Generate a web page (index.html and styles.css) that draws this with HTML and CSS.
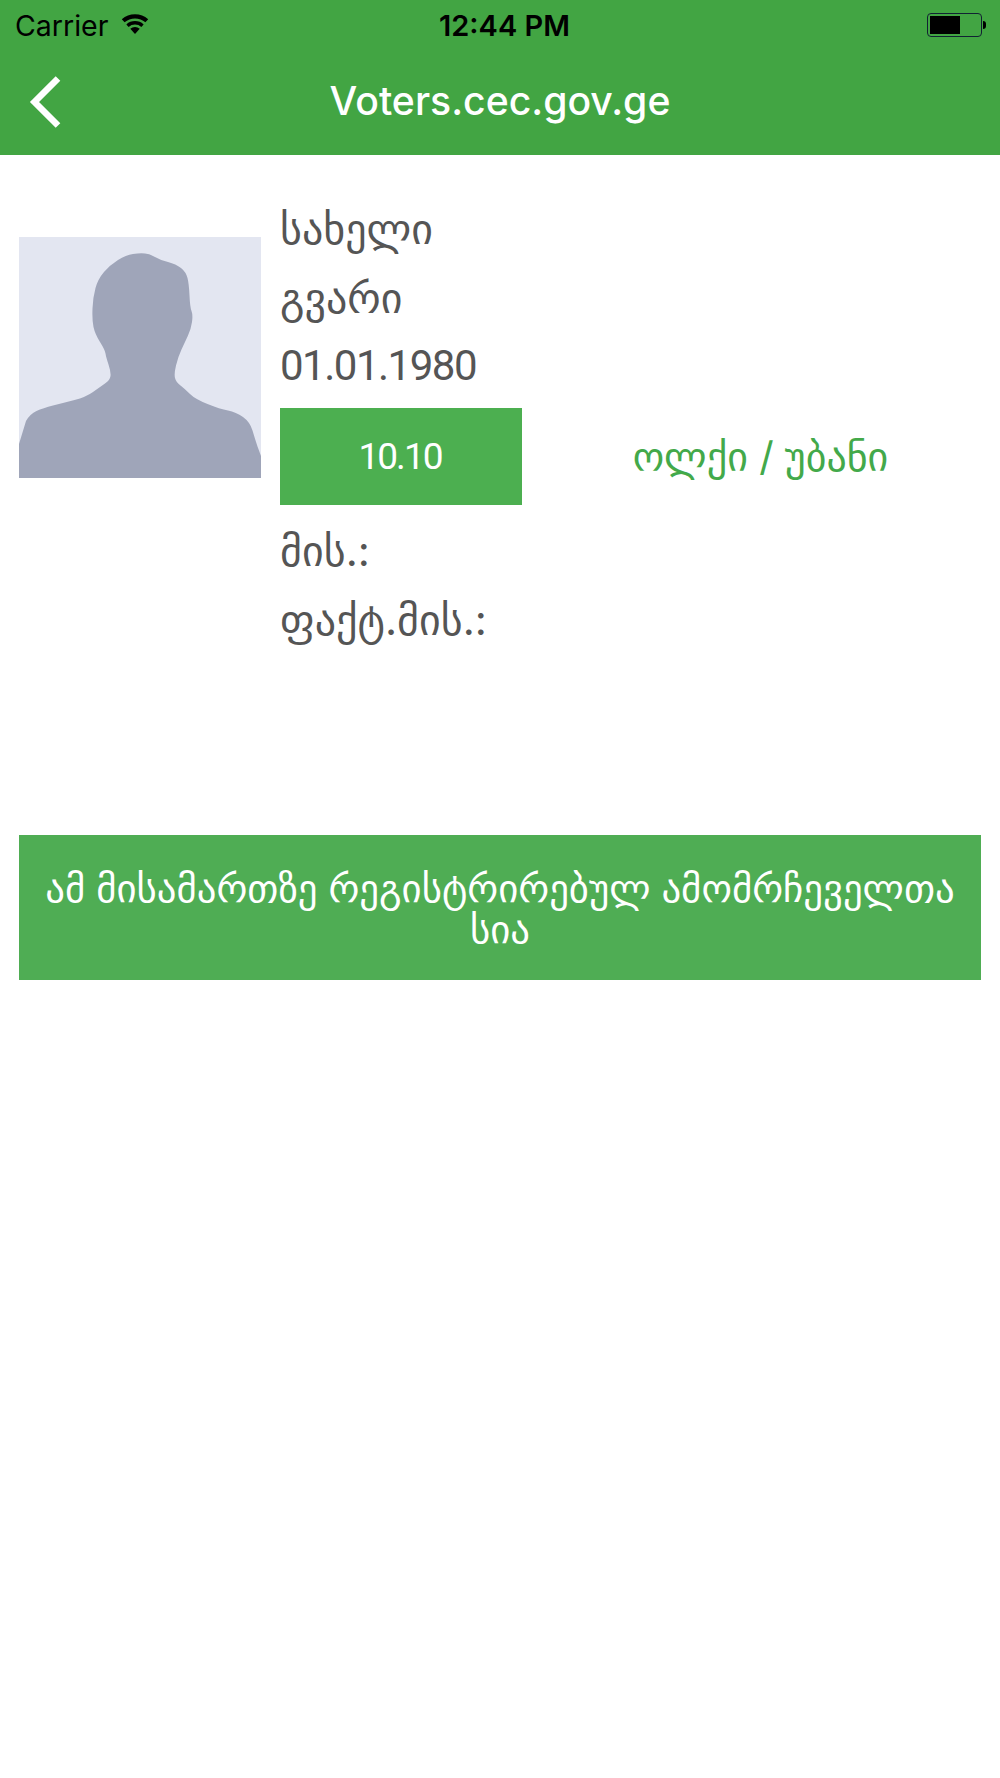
FILE: index.html
```html
<!DOCTYPE html>
<html lang="ka">
<head>
<meta charset="utf-8">
<title>Voters.cec.gov.ge</title>
<link rel="stylesheet" href="styles.css">
</head>
<body>
<header class="top">
  <div class="status">
    <div class="status-left">
      <span class="carrier">Carrier</span>
      <svg class="wifi" viewBox="0 0 28 21" width="28" height="21"><path d="M14 21 L9.3 15.8 A7 7 0 0 1 18.7 15.8 Z"/><path class="wifi-arc" stroke-width="3.4" d="M6.5 12.7 A11.2 11.2 0 0 1 21.5 12.7"/><path class="wifi-arc" stroke-width="4.2" d="M2.2 7.8 A17.7 17.7 0 0 1 25.8 7.8"/></svg>
    </div>
    <span class="clock">12:44 PM</span>
    <div class="battery"><span class="battery-body"><span class="battery-fill"></span></span><span class="battery-tip"></span></div>
  </div>
  <div class="nav">
    <svg class="back" viewBox="0 0 34 54" width="34" height="54"><path d="M31 3.5 L7.5 27 L31 50.5" fill="none" stroke="#fff" stroke-width="6.5"/></svg>
    <h1 class="title">Voters.cec.gov.ge</h1>
  </div>
</header>
<main class="content">
  <section class="profile">
    <div class="photo">
      <svg viewBox="0 0 242 241" width="242" height="241"><path fill="#9fa5b9" d="M0 241 L0 207 L7 184 Q11 177 17.5 174 Q24 171 34 168.5 Q44 166 55.5 163 Q67 160 74 155 Q81 150 86 146.5 Q91 143 91.5 139 Q92 135 89.5 127.5 Q87 120 86.5 116.5 Q86 113 81 105 Q76 97 74.5 90 Q73 83 73.5 71.5 Q74 60 76.5 51 Q79 42 85 35 Q91 28 99 23 Q107 18 114 17 Q121 16 126 16.5 Q131 17 136 20 Q141 23 149 25 Q157 27 162 31 Q167 35 168.5 41 Q170 47 170.5 58.5 Q171 70 172.5 74 Q174 78 173 85 Q172 92 169 98.5 Q166 105 162.5 112.5 Q159 120 157 128.5 Q155 137 156 141 Q157 145 161.5 148.5 Q166 152 171 157 Q176 162 188.5 167 Q201 172 209 173.5 Q217 175 224 180 Q231 185 233.5 193.5 Q236 202 238.5 209.5 L242 219 L242 241 Z"/></svg>
    </div>
    <div class="details">
      <p class="line">სახელი</p>
      <p class="line">გვარი</p>
      <p class="line line-date">01.01.1980</p>
      <div class="district">
        <div class="code">10.10</div>
        <div class="district-label">ოლქი / უბანი</div>
      </div>
      <p class="line">მის.:</p>
      <p class="line">ფაქტ.მის.:</p>
    </div>
  </section>
  <button class="list-btn" type="button">ამ მისამართზე რეგისტრირებულ ამომრჩეველთა სია</button>
</main>
</body>
</html>
```
FILE: styles.css
```css
* { box-sizing: border-box; }
html, body { margin: 0; padding: 0; }
body { width: 1000px; height: 1778px; background: #fff; font-family: "Inter", "DejaVu Sans", sans-serif; color: #555; overflow: hidden; }
.top { background: #42a543; height: 155px; }
.status { height: 50px; display: grid; grid-template-columns: 1fr auto 1fr; align-items: center; padding: 0 14px 0 15px; color: #000; }
.status-left { display: flex; align-items: center; gap: 13px; }
.carrier { font-size: 28.5px; }
.wifi { margin-top: -3px; }
.wifi-arc { fill: none; stroke: #000; }
.clock { font-size: 29px; font-weight: 600; margin-left: 8px; }
.battery { display: flex; align-items: center; justify-self: end; }
.battery-body { width: 55px; height: 24px; border: 1px solid #123; border-radius: 4px; padding: 2px; display: block; }
.battery-fill { display: block; width: 30px; height: 100%; background: #000; }
.battery-tip { width: 3px; height: 8px; background: #000; border-radius: 0 4px 4px 0; margin-left: 1px; }
.nav { height: 105px; display: flex; align-items: center; justify-content: center; position: relative; padding-bottom: 4px; }
.back { position: absolute; left: 27px; top: 25px; }
.title { margin: 0; font-size: 39.2px; font-weight: 550; color: #fff; }
.content { padding: 39px 19px 0; }
.profile { display: flex; align-items: flex-start; gap: 19px; height: 641px; }
.photo { width: 242px; height: 241px; background: #e3e6f1; margin-top: 43px; flex: none; }
.photo svg { display: block; }
.details { flex: 1; }
.line { margin: 0; font-size: 42px; line-height: 69px; color: #555; }
.line-date { line-height: 68px; margin-bottom: 8px; font-family: "Roboto", sans-serif; font-size: 42px; letter-spacing: -1.5px; }
.district { display: flex; align-items: center; height: 97px; margin-bottom: 11px; }
.code { width: 242px; height: 97px; background: #4caf50; color: #fff; font-family: "Roboto", sans-serif; font-size: 37px; font-weight: 400; letter-spacing: -2px; padding-right: 2px; display: flex; align-items: center; justify-content: center; }
.district-label { flex: 1; text-align: center; color: #43a94a; font-size: 40px; padding-left: 18px; }
.list-btn { display: block; width: 962px; height: 145px; border: 0; background: #4fad54; color: #fff; font: inherit; font-size: 38.8px; line-height: 41px; padding: 0 20px; text-align: center; }
```
